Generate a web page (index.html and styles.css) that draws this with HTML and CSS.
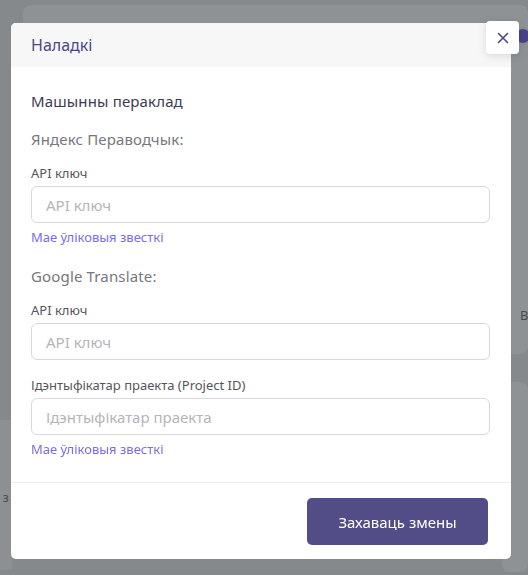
FILE: index.html
```html
<!DOCTYPE html>
<html lang="be">
<head>
<meta charset="utf-8">
<title>Наладкі</title>
<link rel="stylesheet" href="styles.css">
</head>
<body>
<div class="bg-page">
  <div class="bg-card bg-card-top">
    <div class="bg-toggle"></div>
    <div class="bg-text">В</div>
  </div>
  <div class="bg-row">
    <div class="bg-left"><span class="bg-cut">е з</span></div>
    <div class="bg-card bg-card-bottom"></div>
  </div>
</div>

<div class="overlay">
  <div class="modal">
    <div class="modal-header">
      <h2 class="modal-title">Наладкі</h2>
    </div>
    <button class="close-btn" type="button" aria-label="Закрыць">
      <svg width="12" height="12" viewBox="0 0 12 12"><path d="M1.5 1.5 L10.5 10.5 M10.5 1.5 L1.5 10.5" stroke="#4b468a" stroke-width="1.6" stroke-linecap="round"/></svg>
    </button>
    <div class="modal-body">
      <h3 class="section-title">Машынны пераклад</h3>
      <div class="provider">Яндекс Пераводчык:</div>
      <label class="field-label">API ключ</label>
      <input class="field-input" type="text" placeholder="API ключ">
      <a class="field-link" href="#">Мае ўліковыя звесткі</a>

      <div class="provider provider-second">Google Translate:</div>
      <label class="field-label">API ключ</label>
      <input class="field-input" type="text" placeholder="API ключ">
      <label class="field-label field-label-gap">Ідэнтыфікатар праекта (Project ID)</label>
      <input class="field-input" type="text" placeholder="Ідэнтыфікатар праекта">
      <a class="field-link" href="#">Мае ўліковыя звесткі</a>
    </div>
    <div class="modal-footer">
      <button class="save-btn" type="button">Захаваць змены</button>
    </div>
  </div>
</div>
</body>
</html>
```

FILE: styles.css
```css
* { box-sizing: border-box; }

html, body {
  margin: 0;
  height: 575px;
  overflow: hidden;
}

body {
  background: #86898c;
  font-family: "Noto Sans", "Open Sans", sans-serif;
}

.bg-page {
  padding-top: 5px;
  display: flex;
  flex-direction: column;
}

.bg-card {
  background: #8f9295;
  border-radius: 8px;
}

.bg-card-top {
  margin-left: 23px;
  height: 349px;
  display: flex;
  flex-direction: column;
  align-items: flex-end;
}

.bg-toggle {
  width: 14px;
  height: 14px;
  border-radius: 50%;
  background: #48428c;
  margin-top: 24px;
  margin-right: -2px;
}

.bg-text {
  margin-top: 263px;
  width: 8px;
  font-size: 13px;
  color: #4c4d50;
  overflow: hidden;
}

.bg-row {
  display: flex;
  margin-top: 28px;
}

.bg-left {
  width: 12px;
  margin-top: 38px;
  height: 150px;
  background: #8d9093;
  padding-top: 68px;
  overflow: hidden;
}

.bg-cut {
  display: block;
  margin-left: -8px;
  font-size: 13px;
  color: #4c4d50;
  white-space: nowrap;
}

.bg-card-bottom {
  flex: 1;
  height: 190px;
  margin-left: 490px;
}

.overlay {
  position: fixed;
  inset: 0;
  padding: 23px 0 0 11px;
}

.modal {
  position: relative;
  width: 500px;
  height: 536px;
  background: #fff;
  border-radius: 5px;
  display: flex;
  flex-direction: column;
}

.modal-header {
  height: 44px;
  background: #f7f7f8;
  border-radius: 5px 5px 0 0;
  padding-left: 20px;
  display: flex;
  align-items: center;
}

.modal-title {
  margin: 0;
  font-size: 16px;
  font-weight: 400;
  color: #4b468a;
}

.close-btn {
  position: absolute;
  top: -2px;
  right: -8px;
  width: 33px;
  height: 33px;
  border: none;
  border-radius: 4px;
  background: #fff;
  box-shadow: 0 2px 8px rgba(0, 0, 0, 0.12);
  display: flex;
  align-items: center;
  justify-content: center;
  padding: 0;
}

.modal-body {
  flex: 1;
  padding: 24px 21px 24px 20px;
  display: flex;
  flex-direction: column;
  align-items: flex-start;
}

.section-title {
  margin: 0;
  font-size: 15px;
  line-height: 20px;
  font-weight: 400;
  color: #3c3b55;
  letter-spacing: 0.15px;
}

.provider {
  margin-top: 18px;
  font-size: 15px;
  line-height: 20px;
  color: #77777d;
  letter-spacing: 0.15px;
}

.provider-second {
  margin-top: 20px;
}

.field-label {
  margin-top: 15px;
  font-size: 13px;
  line-height: 18px;
  color: #55555c;
}

.field-label-gap {
  margin-top: 16px;
}

.field-input {
  margin-top: 4px;
  width: 459px;
  height: 37px;
  border: 1px solid #d8d7e0;
  border-radius: 6px;
  padding: 0 14px;
  font-family: inherit;
  font-size: 15px;
  color: #333;
  background: #fff;
  outline: none;
}

.field-input::placeholder {
  color: #b5b5ba;
}

.field-link {
  margin-top: 5px;
  font-size: 13px;
  line-height: 18px;
  color: #7a6cef;
  text-decoration: none;
}

.modal-footer {
  border-top: 1px solid #eeeeef;
  height: 77px;
  padding: 15px 23px 0 0;
  display: flex;
  justify-content: flex-end;
  align-items: flex-start;
}

.save-btn {
  width: 181px;
  height: 47px;
  border: none;
  border-radius: 5px;
  background: #524c87;
  color: #fff;
  font-family: inherit;
  font-size: 15px;
}
```
